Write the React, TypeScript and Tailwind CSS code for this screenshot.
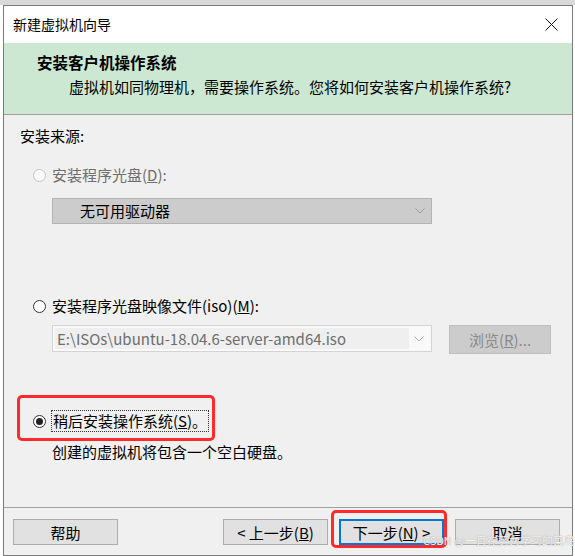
import { ReactNode } from "react";

const font = { fontFamily: '"Noto Sans CJK SC", "Noto Sans", sans-serif' };

function Radio({ state }: { state: "disabled" | "off" | "on" }) {
  if (state === "disabled") {
    return <span className="inline-block h-[13px] w-[13px] rounded-full border border-[#c4c4c4] bg-[#fbfbfb]" />;
  }
  return (
    <span className="flex h-[13px] w-[13px] items-center justify-center rounded-full border border-[#333] bg-white">
      {state === "on" && <span className="h-[7px] w-[7px] rounded-full bg-[#222]" />}
    </span>
  );
}

function Chevron({ color }: { color: string }) {
  return (
    <svg width="10" height="6" viewBox="0 0 10 6" className="shrink-0">
      <path d="M0.5 0.5 L5 5 L9.5 0.5" fill="none" stroke={color} strokeWidth="1" />
    </svg>
  );
}

function Btn({ children, focused }: { children: ReactNode; focused?: boolean }) {
  return (
    <button
      className={
        "flex h-[26px] w-[105px] items-center justify-center bg-[#e1e1e1] text-[15px] leading-none text-black " +
        (focused ? "border-2 border-[#0078d7]" : "border border-[#adadad]")
      }
    >
      {children}
    </button>
  );
}

export default function App() {
  return (
    <div className="relative h-[556px] w-[575px] overflow-hidden bg-white" style={font}>
      <div className="h-[5px] bg-[#d9d9d9]" />
      <div className="ml-[3px] flex h-[551px] w-[570px] flex-col border border-[#7a7a7a] bg-[#f0f0f0]">
        {/* title bar */}
        <div className="flex h-[37px] items-center justify-between bg-white pl-[9px] pr-[14px]">
          <span className="text-[14px] text-black">新建虚拟机向导</span>
          <svg width="13" height="13" viewBox="0 0 13 13">
            <path d="M0.5 0.5 L12.5 12.5 M12.5 0.5 L0.5 12.5" stroke="#111" strokeWidth="1" />
          </svg>
        </div>
        {/* header */}
        <div className="h-[72px] border-b border-[#a0a0a0] bg-[#cde8d2] pt-[9px]">
          <div className="pl-[33px] text-[15.5px] font-bold leading-[20px] text-black">安装客户机操作系统</div>
          <div className="mt-[5px] pl-[65px] text-[15px] leading-[20px] text-black">
            虚拟机如同物理机，需要操作系统。您将如何安装客户机操作系统?
          </div>
        </div>
        {/* body */}
        <div className="flex-1 text-[15px] leading-[20px]">
          <div className="mt-[11px] pl-[16px] text-black">安装来源:</div>

          <div className="mt-[19px] flex items-center gap-[6px] pl-[29px] text-[#6d6d6d]">
            <Radio state="disabled" />
            <span>
              安装程序光盘(<span className="underline">D</span>):
            </span>
          </div>
          <div className="ml-[48px] mt-[13px] flex h-[26px] w-[380px] items-center justify-between border border-[#b4b4b4] bg-[#cccccc] pl-[27px] pr-[6px] text-black">
            <span>无可用驱动器</span>
            <Chevron color="#9a9a9a" />
          </div>

          <div className="mt-[72px] flex items-center gap-[6px] pl-[29px] text-black">
            <Radio state="off" />
            <span>
              安装程序光盘映像文件(iso)(<span className="underline">M</span>):
            </span>
          </div>
          <div className="mt-[9px] flex items-start">
            <div className="ml-[48px] flex h-[27px] w-[380px] items-center border border-[#d4d4d4] bg-[#f9f9f9] p-[2px]">
              <div className="flex h-full w-[354px] items-center bg-[#efefef] pl-[2px] text-[#6d6d6d]">
                E:\ISOs\ubuntu-18.04.6-server-amd64.iso
              </div>
              <div className="flex flex-1 justify-center">
                <Chevron color="#b0b0b0" />
              </div>
            </div>
            <div className="ml-[17px] flex h-[29px] w-[102px] items-center justify-center border border-[#bfbfbf] bg-[#cccccc] text-[#8a8a8a]">
              浏览(<span className="underline">R</span>)...
            </div>
          </div>

          <div className="relative ml-[29px] mt-[56px] flex items-center gap-[5px] text-black">
            <Radio state="on" />
            <span className="border border-dotted border-[#333] px-[1px]">
              稍后安装操作系统(<span className="underline">S</span>)。
            </span>
            <div className="absolute left-[-16px] top-[-15px] h-[46px] w-[198px] rounded-[5px] border-[3px] border-[#ff2a2a]" />
          </div>
          <div className="ml-[48px] mt-[10px] text-black">创建的虚拟机将包含一个空白硬盘。</div>
        </div>
        {/* footer */}
        <div className="flex h-[48px] items-start border-t border-[#a0a0a0] pt-[11px]">
          <div className="ml-[9px]">
            <Btn>帮助</Btn>
          </div>
          <div className="ml-auto mr-[12px] flex gap-[11px]">
            <Btn>
              &lt; 上一步(<span className="underline">B</span>)
            </Btn>
            <div className="relative">
              <Btn focused>
                下一步(<span className="underline">N</span>) &gt;
              </Btn>
              <div className="absolute left-[-8px] top-[-9px] h-[38px] w-[116px] rounded-[5px] border-[3px] border-[#ff2a2a]" />
            </div>
            <Btn>取消</Btn>
          </div>
        </div>
      </div>
      <div
        className="absolute left-[423px] top-[535px] text-[11px] leading-none text-[#f4f4f4]"
        style={{ textShadow: "0 0 1px #8a8a8a" }}
      >
        CSDN @一直在努力学习的菜鸟
      </div>
    </div>
  );
}
